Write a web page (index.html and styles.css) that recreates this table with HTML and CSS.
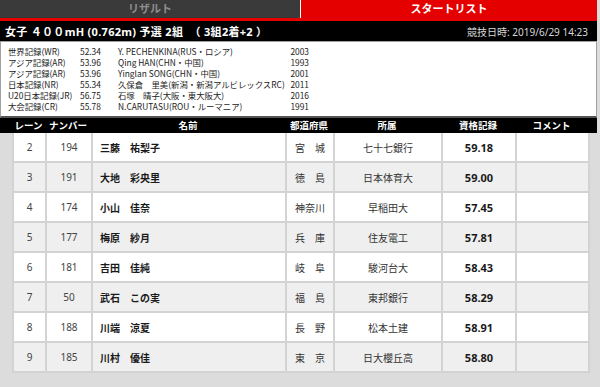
FILE: index.html
```html
<!DOCTYPE html>
<html lang="ja">
<head>
<meta charset="utf-8">
<link rel="stylesheet" href="styles.css">
</head>
<body>
<div class="page">
  <div class="tabs">
    <div class="tab tab-off">リザルト</div>
    <div class="tab tab-on">スタートリスト</div>
  </div>
  <div class="redline"></div>
  <div class="titlebar">
    <div class="title">女子 ４００mH (0.762m) 予選 2組  （ 3組2着+2 ）</div>
    <div class="date">競技日時: 2019/6/29 14:23</div>
  </div>
  <div class="records">
    <div class="rec"><span>世界記録(WR)</span><span>52.34</span><span>Y. PECHENKINA(RUS・ロシア)</span><span class="yr">2003</span></div>
    <div class="rec"><span>アジア記録(AR)</span><span>53.96</span><span>Qing HAN(CHN・中国)</span><span class="yr">1993</span></div>
    <div class="rec"><span>アジア記録(AR)</span><span>53.96</span><span>Yinglan SONG(CHN・中国)</span><span class="yr">2001</span></div>
    <div class="rec"><span>日本記録(NR)</span><span>55.34</span><span>久保倉　里美(新潟・新潟アルビレックスRC)</span><span class="yr">2011</span></div>
    <div class="rec"><span>U20日本記録(JR)</span><span>56.75</span><span>石塚　晴子(大阪・東大阪大)</span><span class="yr">2016</span></div>
    <div class="rec"><span>大会記録(CR)</span><span>55.78</span><span>N.CARUTASU(ROU・ルーマニア)</span><span class="yr">1991</span></div>
  </div>
  <div class="thead">
    <div class="th">レーン</div>
    <div class="th">ナンバー</div>
    <div class="th">名前</div>
    <div class="th">都道府県</div>
    <div class="th">所属</div>
    <div class="th">資格記録</div>
    <div class="th">コメント</div>
  </div>
  <div class="body">
    <table class="list">
      <colgroup>
        <col class="c1"><col class="c2"><col class="c3"><col class="c4"><col class="c5"><col class="c6"><col class="c7">
      </colgroup>
      <tbody>
        <tr><td class="num">2</td><td class="num">194</td><td class="name">三藤　祐梨子</td><td class="pref">宮　城</td><td class="aff">七十七銀行</td><td class="rec-t">59.18</td><td></td></tr>
        <tr><td class="num">3</td><td class="num">191</td><td class="name">大地　彩央里</td><td class="pref">徳　島</td><td class="aff">日本体育大</td><td class="rec-t">59.00</td><td></td></tr>
        <tr><td class="num">4</td><td class="num">174</td><td class="name">小山　佳奈</td><td class="pref">神奈川</td><td class="aff">早稲田大</td><td class="rec-t">57.45</td><td></td></tr>
        <tr><td class="num">5</td><td class="num">177</td><td class="name">梅原　紗月</td><td class="pref">兵　庫</td><td class="aff">住友電工</td><td class="rec-t">57.81</td><td></td></tr>
        <tr><td class="num">6</td><td class="num">181</td><td class="name">吉田　佳純</td><td class="pref">岐　阜</td><td class="aff">駿河台大</td><td class="rec-t">58.43</td><td></td></tr>
        <tr><td class="num">7</td><td class="num">50</td><td class="name">武石　この実</td><td class="pref">福　島</td><td class="aff">東邦銀行</td><td class="rec-t">58.29</td><td></td></tr>
        <tr><td class="num">8</td><td class="num">188</td><td class="name">川端　涼夏</td><td class="pref">長　野</td><td class="aff">松本土建</td><td class="rec-t">58.91</td><td></td></tr>
        <tr><td class="num">9</td><td class="num">185</td><td class="name">川村　優佳</td><td class="pref">東　京</td><td class="aff">日大櫻丘高</td><td class="rec-t">58.80</td><td></td></tr>
      </tbody>
    </table>
  </div>
</div>
</body>
</html>
```

FILE: styles.css
```css
html, body {
  margin: 0;
  padding: 0;
}
body {
  background: #dcdcdc;
  font-family: "Noto Sans", "Noto Sans CJK JP", sans-serif;
  width: 600px;
  height: 387px;
  overflow: hidden;
}
.page {
  width: 597px;
}
.tabs {
  display: flex;
  height: 18px;
  background: #ffffff;
}
.tab {
  display: flex;
  align-items: center;
  justify-content: center;
  font-size: 11px;
  font-weight: bold;
  line-height: 18px;
}
.tab-off {
  width: 300px;
  background: #3a3a3a;
  color: #8e8e8e;
}
.tab-on {
  width: 296px;
  margin-left: 1px;
  background: #e50000;
  color: #ffffff;
}
.redline {
  height: 3px;
  background: #e50000;
}
.titlebar {
  display: flex;
  align-items: center;
  justify-content: space-between;
  height: 20px;
  background: #000000;
  padding: 0 9px 0 5px;
}
.title {
  color: #ffffff;
  font-size: 11px;
  font-weight: bold;
  letter-spacing: 0.3px;
  white-space: pre;
}
.date {
  color: #d8d8d8;
  font-size: 10px;
}
.records {
  background: #ffffff;
  border: 1px solid #a0a0a0;
  border-bottom: 2px solid #555555;
  height: 70px;
  padding: 4px 0 0 7px;
}
.rec {
  display: grid;
  grid-template-columns: 72px 38px 171px 20px;
  height: 11px;
  font-family: "Noto Sans CJK JP", sans-serif;
  font-size: 8.4px;
  line-height: 11px;
  color: #222222;
  white-space: nowrap;
}
.rec .yr {
  text-align: right;
}
.thead {
  display: grid;
  grid-template-columns: 33px 46px 194px 48px 108px 74px 73px;
  height: 15px;
  background: #000000;
  padding-left: 12px;
}
.th {
  color: #ffffff;
  font-size: 9.5px;
  font-weight: bold;
  line-height: 15px;
  text-align: center;
  white-space: nowrap;
}
.body {
  padding: 0 9px 0 12px;
}
.list {
  width: 576px;
  border-collapse: collapse;
  table-layout: fixed;
  font-size: 10px;
  color: #333333;
}
.c1 { width: 33px; }
.c2 { width: 46px; }
.c3 { width: 194px; }
.c4 { width: 48px; }
.c5 { width: 108px; }
.c6 { width: 74px; }
.c7 { width: 73px; }
.list td {
  border: 2px solid #d3d3d3;
  height: 28px;
  padding: 0;
  text-align: center;
  white-space: nowrap;
}
.list tr:nth-child(odd) td {
  background: #ffffff;
}
.list tr:nth-child(even) td {
  background: #efefef;
}
.list tr:first-child td {
  border-top: none;
}
.list .num {
  color: #444444;
}
.list .name {
  text-align: left;
  padding-left: 7px;
  font-weight: bold;
  color: #1a1a1a;
}
.list .rec-t {
  font-weight: bold;
  font-size: 11px;
  color: #1a1a1a;
}
```
